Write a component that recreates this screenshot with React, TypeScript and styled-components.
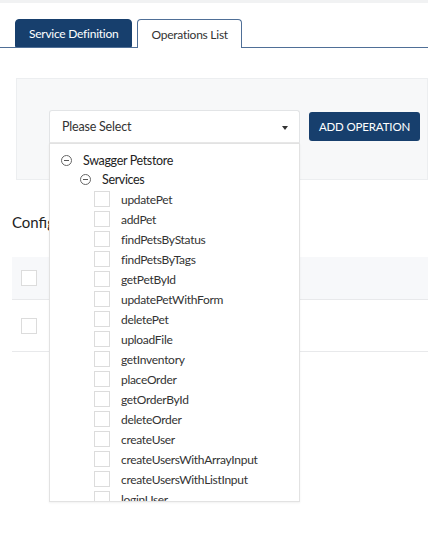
import React from "react";
import styled, { createGlobalStyle } from "styled-components";

const Global = createGlobalStyle`
  html, body { margin: 0; padding: 0; background: #fff; }
  body { font-family: Lato, "Noto Sans", Arial, sans-serif; color: #222; }
  * { box-sizing: border-box; }
`;

const Page = styled.div`
  width: 428px;
  min-height: 533px;
  position: relative;
`;

const TopStrip = styled.div`
  height: 3px;
  background: #f1f2f3;
`;

const TabBar = styled.div`
  display: flex;
  gap: 5px;
  padding-left: 15px;
  margin-top: 16px;
  border-bottom: 1px solid #4f6f97;
  height: 29px;
`;

const Tab = styled.div<{ $active?: boolean }>`
  height: ${(p) => (p.$active ? "29px" : "28px")};
  padding: 0 13px;
  display: flex;
  align-items: center;
  font-size: 12px;
  letter-spacing: -0.25px;
  border-radius: 4px 4px 0 0;
  background: ${(p) => (p.$active ? "#fff" : "#173f6d")};
  color: ${(p) => (p.$active ? "#333" : "#fff")};
  border: 1px solid ${(p) => (p.$active ? "#4f6f97" : "#173f6d")};
  border-bottom: ${(p) => (p.$active ? "none" : "1px solid #173f6d")};
  margin-bottom: ${(p) => (p.$active ? "-1px" : "0")};
  position: relative;
  z-index: 1;
`;

const Panel = styled.div`
  margin: 30px 0 0 16px;
  height: 102px;
  background: #f7f8f9;
  border: 1px solid #eceef0;
  padding: 31px 0 0 32px;
  display: flex;
  align-items: flex-start;
  gap: 9px;
`;

const SelectWrap = styled.div`
  position: relative;
  width: 251px;
`;

const SelectBox = styled.div`
  height: 33px;
  background: #fff;
  border: 1px solid #e2e4e6;
  border-bottom-color: #e8e8e8;
  border-radius: 3px 3px 0 0;
  display: flex;
  align-items: center;
  justify-content: space-between;
  padding: 0 11px 0 12px;
  font-size: 12.5px;
  letter-spacing: -0.2px;
  color: #333;
`;

const Caret = styled.span`
  width: 0;
  height: 0;
  border-left: 3.5px solid transparent;
  border-right: 3.5px solid transparent;
  border-top: 4px solid #333;
  margin-top: 2px;
`;

const Dropdown = styled.div`
  position: absolute;
  top: 33px;
  left: 0;
  width: 251px;
  height: 359px;
  background: #fff;
  border: 1px solid #e2e2e2;
  box-shadow: 0 1px 2px rgba(0, 0, 0, 0.06);
  overflow: hidden;
  z-index: 10;
  padding-top: 7px;
`;

const TreeRow = styled.div<{ $indent: number }>`
  display: flex;
  align-items: center;
  height: 19px;
  padding-left: ${(p) => p.$indent}px;
  font-size: 12.5px;
  letter-spacing: -0.35px;
  color: #222;
`;

const Minus = styled.span`
  width: 11px;
  height: 11px;
  border: 1px solid #666;
  border-radius: 50%;
  display: inline-flex;
  align-items: center;
  justify-content: center;
  margin-right: 11px;
  &::after {
    content: "";
    width: 5px;
    height: 1px;
    background: #555;
  }
`;

const ItemRow = styled.div`
  display: flex;
  align-items: center;
  height: 20px;
  padding-left: 44px;
  font-size: 12px;
  letter-spacing: -0.3px;
  color: #333;
`;

const Check = styled.span`
  width: 16px;
  height: 16px;
  border: 1px solid #dcdcdc;
  background: #fff;
  margin-right: 11px;
  flex: none;
`;

const Button = styled.button`
  margin-top: 2px;
  height: 29px;
  width: 111px;
  background: #173f6d;
  color: #fff;
  border: none;
  border-radius: 3px;
  font-family: inherit;
  font-size: 11.5px;
  letter-spacing: -0.15px;
  padding: 0;
`;

const Heading = styled.div`
  margin: 32px 0 0 12px;
  font-size: 15px;
  color: #222;
  line-height: 20px;
`;

const Table = styled.div`
  margin: 25px 0 0 12px;
`;

const Row = styled.div<{ $head?: boolean }>`
  height: ${(p) => (p.$head ? "43px" : "52px")};
  background: ${(p) => (p.$head ? "#f7f8fa" : "#fff")};
  border-bottom: 1px solid #e8e9eb;
  display: flex;
  align-items: center;
  padding-left: 9px;
`;

const items = [
  "updatePet",
  "addPet",
  "findPetsByStatus",
  "findPetsByTags",
  "getPetById",
  "updatePetWithForm",
  "deletePet",
  "uploadFile",
  "getInventory",
  "placeOrder",
  "getOrderById",
  "deleteOrder",
  "createUser",
  "createUsersWithArrayInput",
  "createUsersWithListInput",
  "loginUser",
  "logoutUser",
];

export default function App() {
  return (
    <Page>
      <Global />
      <TopStrip />
      <TabBar>
        <Tab>Service Definition</Tab>
        <Tab $active>Operations List</Tab>
      </TabBar>
      <Panel>
        <SelectWrap>
          <SelectBox>
            <span>Please Select</span>
            <Caret />
          </SelectBox>
          <Dropdown>
            <TreeRow $indent={11}>
              <Minus />
              Swagger Petstore
            </TreeRow>
            <TreeRow $indent={30}>
              <Minus />
              Services
            </TreeRow>
            {items.map((it) => (
              <ItemRow key={it}>
                <Check />
                {it}
              </ItemRow>
            ))}
          </Dropdown>
        </SelectWrap>
        <Button>ADD OPERATION</Button>
      </Panel>
      <Heading>Configured Operations</Heading>
      <Table>
        <Row $head>
          <Check />
        </Row>
        <Row>
          <Check />
        </Row>
      </Table>
    </Page>
  );
}
